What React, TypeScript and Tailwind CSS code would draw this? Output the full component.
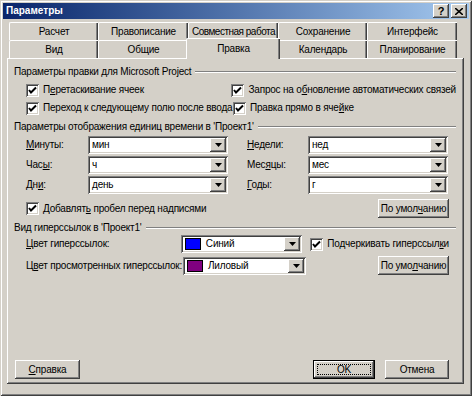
import type { ReactNode } from "react";

const raised = "shadow-[inset_-1px_-1px_#404040,inset_1px_1px_#ffffff,inset_-2px_-2px_#808080,inset_2px_2px_#d4d0c8]";
const sunken = "shadow-[inset_1px_1px_#808080,inset_-1px_-1px_#ffffff,inset_2px_2px_#404040,inset_-2px_-2px_#d4d0c8]";

function CheckBox({ children }: { children: ReactNode }) {
	return (
		<div className="flex items-center">
			<div className={`w-[13px] h-[13px] bg-white flex items-center justify-center ${sunken}`}>
				<svg width="13" height="13" viewBox="0 0 13 13">
					<polyline points="3,6 5,8.5 10,3.5" fill="none" stroke="#000" strokeWidth="2" />
				</svg>
			</div>
			<span className="ml-[4px]">{children}</span>
		</div>
	);
}

function Arrow() {
	return (
		<div className={`w-[16px] h-full bg-[#d4d0c8] flex items-center justify-center ${raised}`}>
			<svg width="7" height="4" viewBox="0 0 7 4">
				<polygon points="0,0 7,0 3.5,4" fill="#000" />
			</svg>
		</div>
	);
}

function Combo({ value, width, swatch }: { value: string; width: string; swatch?: string }) {
	return (
		<div className={`${width} h-[18px] bg-white p-[2px] flex ${sunken}`}>
			<div className="flex-1 flex items-center pl-[2px]">
				{swatch ? <div className="w-[16px] h-[12px] border border-black mr-[5px]" style={{ background: swatch }} /> : null}
				<span>{value}</span>
			</div>
			<Arrow />
		</div>
	);
}

function Button({ children, width, isDefault }: { children: ReactNode; width: string; isDefault?: boolean }) {
	if (isDefault) {
		return (
			<div className={`${width} h-[19px] border border-black bg-[#d4d0c8] p-[3px] flex ${raised}`}>
				<div className="flex-1 border border-dotted border-black flex items-center justify-center">{children}</div>
			</div>
		);
	}
	return <div className={`${width} h-[19px] bg-[#d4d0c8] flex items-center justify-center ${raised}`}>{children}</div>;
}

function GroupHeader({ title }: { title: string }) {
	return (
		<div className="h-[14px] flex items-center">
			<span>{title}</span>
			<div className="ml-[4px] flex-1 border-t border-t-[#808080] border-b border-b-white" />
		</div>
	);
}

function Tab({ label, width, selected, tight }: { label: string; width: string; selected?: boolean; tight?: boolean }) {
	const text = <span className={tight ? "tracking-[-0.5px]" : ""}>{label}</span>;
	if (selected) {
		return (
			<div className={`${width} -mx-[2px] -mt-[2px] h-[21px] relative z-10 bg-[#d4d0c8] border-l border-t border-white rounded-tl-[2px] shadow-[inset_-1px_0_#404040,inset_-2px_0_#808080] flex items-center justify-center`}>
				{text}
			</div>
		);
	}
	return (
		<div className={`${width} h-[18px] bg-[#d4d0c8] border-l border-t border-white rounded-tl-[2px] shadow-[inset_-1px_0_#404040,inset_-2px_0_#808080] flex items-center justify-center`}>
			{text}
		</div>
	);
}

export default function App() {
	return (
		<div className="w-[472px] h-[396px] bg-[#d4d0c8] p-[3px] flex flex-col text-[10px] tracking-[-0.2px] text-black leading-none whitespace-nowrap font-['Liberation_Sans',Arial,sans-serif] shadow-[inset_1px_1px_#d4d0c8,inset_-1px_-1px_#404040,inset_2px_2px_#ffffff,inset_-2px_-2px_#808080]">
			<div className="h-[16px] bg-gradient-to-r from-[#0a246a] to-[#a6caf0] flex items-center justify-between pl-[3px] pr-[2px]">
				<span className="text-white font-bold text-[10px] tracking-normal">Параметры</span>
				<div className="flex gap-[2px]">
					<div className={`w-[16px] h-[14px] bg-[#d4d0c8] flex items-center justify-center font-bold text-[11px] ${raised}`}>?</div>
					<div className={`w-[16px] h-[14px] bg-[#d4d0c8] flex items-center justify-center ${raised}`}>
						<svg width="8" height="7" viewBox="0 0 8 7">
							<path d="M0 0 L8 7 M8 0 L0 7" stroke="#000" strokeWidth="1.6" />
						</svg>
					</div>
				</div>
			</div>

			<div className="mt-[3px] ml-[6px]">
				<div className="flex h-[18px]">
					<Tab label="Расчет" width="w-[89px]" />
					<Tab label="Правописание" width="w-[90px]" />
					<Tab label="Совместная работа" width="w-[90px]" tight />
					<Tab label="Сохранение" width="w-[89px]" />
					<Tab label="Интерфейс" width="w-[90px]" />
				</div>
				<div className="flex h-[18px] items-start">
					<Tab label="Вид" width="w-[89px]" />
					<Tab label="Общие" width="w-[90px]" />
					<Tab label="Правка" width="w-[94px]" selected />
					<Tab label="Календарь" width="w-[89px]" />
					<Tab label="Планирование" width="w-[90px]" />
				</div>
			</div>

			<div className={`ml-[4px] w-[457px] h-[326px] flex flex-col pl-[7px] pr-[8px] ${raised}`}>
				<div className="mt-[7px]">
					<GroupHeader title="Параметры правки для Microsoft Project" />
				</div>
				<div className="mt-[2px] ml-[12px] flex h-[18px] items-center">
					<div className="w-[207px]">
						<CheckBox>П<u>е</u>ретаскивание ячеек</CheckBox>
					</div>
					<CheckBox>Запрос на о<u>б</u>новление автоматических связей</CheckBox>
				</div>
				<div className="ml-[12px] flex h-[18px] items-center">
					<div className="w-[207px]">
						<CheckBox>Перехо<u>д</u> к следующему полю после ввода</CheckBox>
					</div>
					<CheckBox>Правка прямо в яче<u>й</u>ке</CheckBox>
				</div>

				<div className="mt-[3px]">
					<GroupHeader title="Параметры отображения единиц времени в 'Проект1'" />
				</div>
				<div className="mt-[1px] ml-[12px] flex flex-col">
					{[
						[<><u>М</u>инуты:</>, "мин", <><u>Н</u>едели:</>, "нед"],
						[<>Час<u>ы</u>:</>, "ч", <>Мес<u>я</u>цы:</>, "мес"],
						[<>Дн<u>и</u>:</>, "день", <><u>Г</u>оды:</>, "г"],
					].map((row, i) => (
						<div key={i} className="h-[20px] flex items-center">
							<span className="w-[62px]">{row[0]}</span>
							<Combo value={row[1] as string} width="w-[140px]" />
							<span className="ml-[19px] w-[61px]">{row[2]}</span>
							<Combo value={row[3] as string} width="w-[140px]" />
						</div>
					))}
				</div>
				<div className="mt-[3px] ml-[12px] h-[21px] flex items-center justify-between mr-[7px]">
					<CheckBox>Добавлят<u>ь</u> пробел перед надписями</CheckBox>
					<Button width="w-[71px]">По умол<u>ч</u>анию</Button>
				</div>

				<div className="mt-[2px]">
					<GroupHeader title="Вид гиперссылок в 'Проект1'" />
				</div>
				<div className="ml-[12px] mr-[7px] flex flex-col gap-[3px]">
					<div className="h-[18px] flex items-center">
						<span className="w-[157px]"><u>Ц</u>вет гиперссылок:</span>
						<Combo value="Синий" width="w-[123px]" swatch="#0000ff" />
						<div className="ml-[8px]">
							<CheckBox>Подчеркивать гиперссыл<u>к</u>и</CheckBox>
						</div>
					</div>
					<div className="h-[19px] flex items-center">
						<span className="w-[157px]">Ц<u>в</u>ет просмотренных гиперссылок:</span>
						<Combo value="Лиловый" width="w-[123px]" swatch="#800080" />
						<div className="ml-auto">
							<Button width="w-[71px]">По умо<u>л</u>чанию</Button>
						</div>
					</div>
				</div>

				<div className="mt-auto mb-[5px] ml-[1px] mr-[7px] flex items-center">
					<Button width="w-[65px]"><u>С</u>правка</Button>
					<div className="ml-auto flex gap-[10px]">
						<Button width="w-[62px]" isDefault>OK</Button>
						<Button width="w-[64px]">Отмена</Button>
					</div>
				</div>
			</div>
		</div>
	);
}
